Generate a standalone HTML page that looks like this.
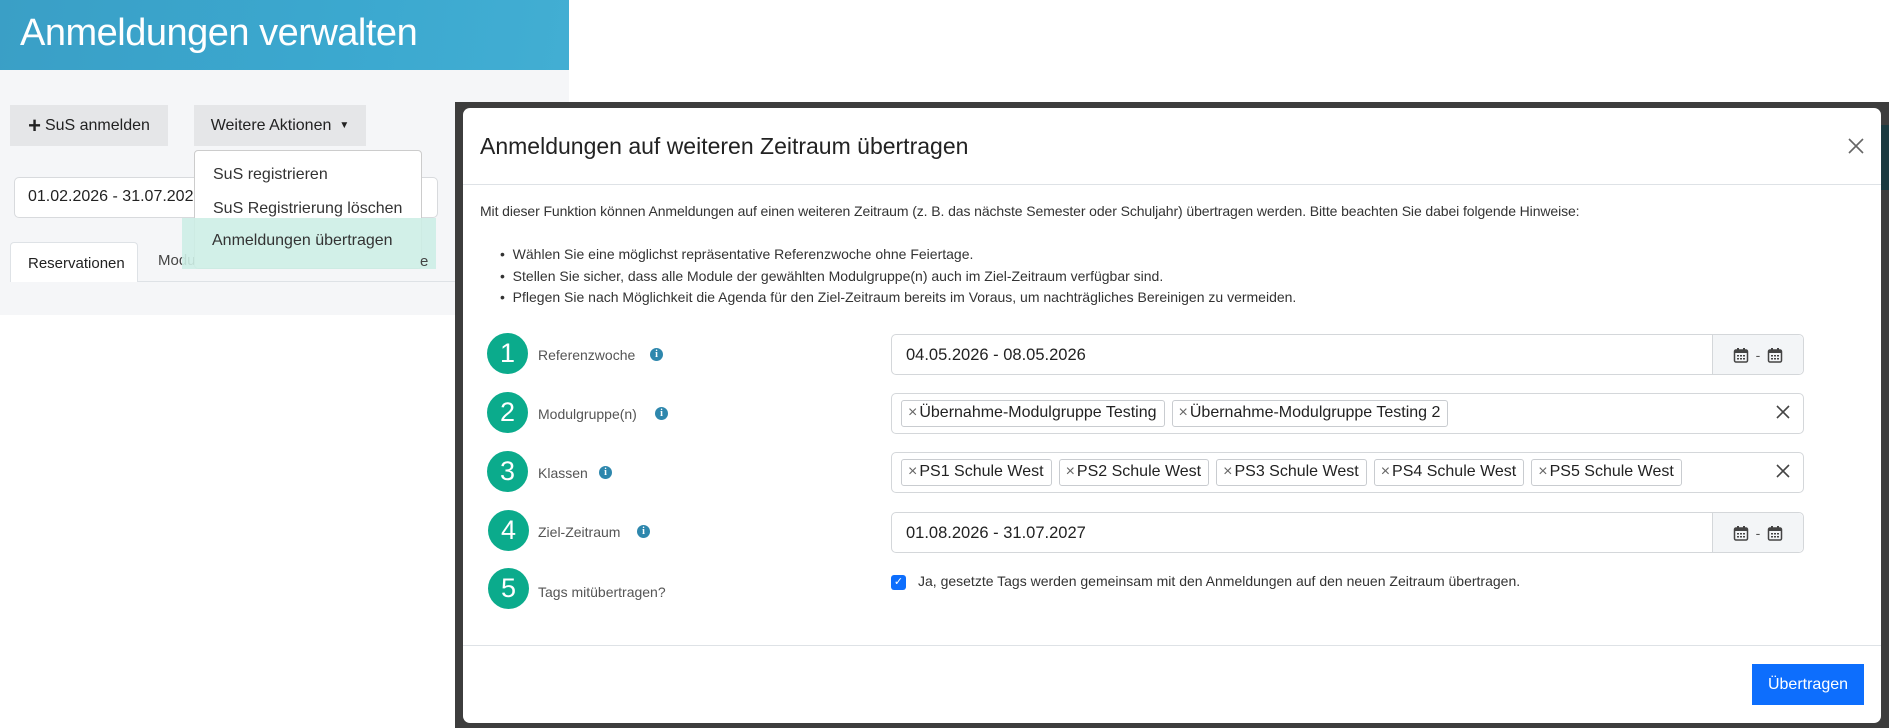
<!DOCTYPE html>
<html><head><meta charset="utf-8">
<style>
*{box-sizing:border-box;margin:0;padding:0}
body{width:1889px;height:728px;position:relative;overflow:hidden;background:#fff;font-family:"Liberation Sans",sans-serif;color:#333}
.a{position:absolute}
.hdr{left:0;top:0;width:569px;height:70px;background:linear-gradient(100deg,#3a9fc6,#3ba8cf 60%,#42aed3)}
.hdr span{position:absolute;left:20px;top:12px;font-size:38px;color:#fff;font-weight:300;letter-spacing:-0.5px}
.pg{left:0;top:70px;width:569px;height:245px;background:#f5f6f8}
.btn{background:#e5e6e8;font-size:16px;color:#222;display:flex;align-items:center;justify-content:center}
.dd{left:194px;top:150px;width:228px;height:119px;background:#fff;border:1px solid #ccc;border-radius:4px}
.dd div{position:absolute;left:18px;font-size:16px;color:#333}
.bd{left:455px;top:102px;width:1434px;height:626px;background:#3d3d3d}
.modal{left:463px;top:108px;width:1418px;height:615px;background:#fff;border-radius:7px}
.lbl{font-size:14px;color:#555}
.circ{width:41px;height:41px;border-radius:50%;background:#0bab8c;color:#fff;font-size:27px;display:flex;align-items:center;justify-content:center}
.inf{width:13px;height:13px;border-radius:50%;background:#2e87ad;color:#fff;font-size:10px;font-weight:bold;font-family:"Liberation Serif",serif;display:flex;align-items:center;justify-content:center}
.inp{left:891px;width:913px;height:41px;border:1px solid #d4d7da;border-radius:5px;background:#fff}
.inp .t{position:absolute;left:14px;top:11px;font-size:16.5px;color:#222}
.addon{position:absolute;right:0;top:0;width:91px;height:39px;background:#f3f5f7;border-left:1px solid #d4d7da;border-radius:0 5px 5px 0;display:flex;align-items:center;justify-content:center;gap:7px;color:#555;font-size:14px}
.tags{position:absolute;left:9px;top:6px;display:flex;gap:7px}
.tag{height:27px;border:1px solid #c9ccd0;border-radius:3px;font-size:16px;color:#222;padding:3px 7px 0 6px;white-space:nowrap}
.tag i{font-style:normal;color:#666;margin-right:2px}
.clr{position:absolute;right:12px;top:10px}
</style></head><body>
<div class="a hdr"><span>Anmeldungen verwalten</span></div>
<div class="a pg"></div>
<div class="a btn" style="left:10px;top:105px;width:158px;height:41px"><b style="font-size:22px;margin-right:4px;font-weight:bold">+</b>SuS anmelden</div>
<div class="a btn" style="left:194px;top:105px;width:172px;height:41px">Weitere Aktionen <span style="font-size:10px;margin-left:8px">▼</span></div>
<div class="a" style="left:14px;top:177px;width:424px;height:41px;background:#fff;border:1px solid #d8dadd;border-radius:5px"><span style="position:absolute;left:13px;top:10px;font-size:16px;color:#222">01.02.2026 - 31.07.2026</span></div>
<div class="a" style="left:10px;top:242px;width:128px;height:40px;background:#fff;border:1px solid #dee2e6;border-bottom:none;border-radius:4px 4px 0 0;font-size:15px;color:#222;padding:12px 0 0 17px">Reservationen</div>
<div class="a" style="left:138px;top:281px;width:431px;height:1px;background:#dee2e6"></div>
<div class="a" style="left:158px;top:252px;font-size:15px;color:#444">Modul</div>
<div class="a dd"><div style="top:15px">SuS registrieren</div><div style="top:49px">SuS Registrierung löschen</div></div>
<div class="a" style="left:182px;top:218px;width:254px;height:51px;background:#cdeee6;opacity:.9"></div>
<div class="a" style="left:212px;top:232px;font-size:16px;color:#333">Anmeldungen übertragen</div>
<div class="a" style="left:420px;top:253px;font-size:15px;color:#444">e</div>

<div class="a bd"></div>
<div class="a" style="left:1881px;top:125px;width:8px;height:65px;background:#1b3a40"></div>
<div class="a modal"></div>
<div class="a" style="left:480px;top:133px;font-size:23px;color:#222">Anmeldungen auf weiteren Zeitraum übertragen</div>
<svg class="a" style="left:1848px;top:138px" width="16" height="16" viewBox="0 0 16 16"><path d="M1 1L15 15M15 1L1 15" stroke="#666" stroke-width="1.6"/></svg>
<div class="a" style="left:463px;top:184px;width:1418px;height:1px;background:#dee2e6"></div>
<div class="a" style="left:480px;top:203px;font-size:14px;color:#333;letter-spacing:-0.1px">Mit dieser Funktion können Anmeldungen auf einen weiteren Zeitraum (z. B. das nächste Semester oder Schuljahr) übertragen werden. Bitte beachten Sie dabei folgende Hinweise:</div>
<div class="a" style="left:500px;top:244px;font-size:14px;color:#333;line-height:21.5px">
• &nbsp;Wählen Sie eine möglichst repräsentative Referenzwoche ohne Feiertage.<br>
• &nbsp;Stellen Sie sicher, dass alle Module der gewählten Modulgruppe(n) auch im Ziel-Zeitraum verfügbar sind.<br>
• &nbsp;Pflegen Sie nach Möglichkeit die Agenda für den Ziel-Zeitraum bereits im Voraus, um nachträgliches Bereinigen zu vermeiden.</div>

<div class="a circ" style="left:487px;top:333px">1</div>
<div class="a lbl" style="left:538px;top:347px">Referenzwoche</div>
<div class="a inf" style="left:650px;top:348px">i</div>
<div class="a circ" style="left:487px;top:392px">2</div>
<div class="a lbl" style="left:538px;top:406px">Modulgruppe(n)</div>
<div class="a inf" style="left:655px;top:407px">i</div>
<div class="a circ" style="left:487px;top:451px">3</div>
<div class="a lbl" style="left:538px;top:465px">Klassen</div>
<div class="a inf" style="left:599px;top:466px">i</div>
<div class="a circ" style="left:488px;top:510px">4</div>
<div class="a lbl" style="left:538px;top:524px">Ziel-Zeitraum</div>
<div class="a inf" style="left:637px;top:525px">i</div>
<div class="a circ" style="left:488px;top:568px">5</div>
<div class="a lbl" style="left:538px;top:584px">Tags mitübertragen?</div>

<svg width="0" height="0" style="position:absolute"><defs><symbol id="cal" viewBox="0 0 16 16"><rect x="1.5" y="3" width="13" height="12" rx="1.5" fill="none" stroke="#444" stroke-width="1.5"/><rect x="1.5" y="3" width="13" height="3" fill="#444"/><rect x="4" y="1" width="2" height="3" fill="#444"/><rect x="10" y="1" width="2" height="3" fill="#444"/><g fill="#444"><rect x="4" y="8" width="2" height="1.5"/><rect x="7" y="8" width="2" height="1.5"/><rect x="10" y="8" width="2" height="1.5"/><rect x="4" y="11" width="2" height="1.5"/><rect x="7" y="11" width="2" height="1.5"/><rect x="10" y="11" width="2" height="1.5"/></g></symbol><symbol id="x" viewBox="0 0 16 16"><path d="M2 2L14 14M14 2L2 14" stroke="#444" stroke-width="1.6"/></symbol></defs></svg>

<div class="a inp" style="top:334px"><span class="t">04.05.2026 - 08.05.2026</span><div class="addon"><svg width="16" height="16"><use href="#cal"/></svg>-<svg width="16" height="16"><use href="#cal"/></svg></div></div>
<div class="a inp" style="top:393px">
<div class="tags"><div class="tag"><i>×</i>Übernahme-Modulgruppe Testing</div><div class="tag"><i>×</i>Übernahme-Modulgruppe Testing 2</div></div>
<svg class="clr" width="16" height="16"><use href="#x"/></svg></div>
<div class="a inp" style="top:452px">
<div class="tags">
<div class="tag"><i>×</i>PS1 Schule West</div>
<div class="tag"><i>×</i>PS2 Schule West</div>
<div class="tag"><i>×</i>PS3 Schule West</div>
<div class="tag"><i>×</i>PS4 Schule West</div>
<div class="tag"><i>×</i>PS5 Schule West</div></div>
<svg class="clr" width="16" height="16"><use href="#x"/></svg></div>
<div class="a inp" style="top:512px"><span class="t">01.08.2026 - 31.07.2027</span><div class="addon"><svg width="16" height="16"><use href="#cal"/></svg>-<svg width="16" height="16"><use href="#cal"/></svg></div></div>
<div class="a" style="left:891px;top:575px;width:15px;height:15px;background:#0d6efd;border-radius:3px;color:#fff;font-size:11px;text-align:center;line-height:15px">✓</div>
<div class="a" style="left:918px;top:573px;font-size:14px;color:#333">Ja, gesetzte Tags werden gemeinsam mit den Anmeldungen auf den neuen Zeitraum übertragen.</div>

<div class="a" style="left:463px;top:645px;width:1418px;height:1px;background:#dee2e6"></div>
<div class="a" style="left:1752px;top:664px;width:112px;height:41px;background:#0d6efd;color:#fff;font-size:16px;display:flex;align-items:center;justify-content:center">Übertragen</div>
</body></html>
